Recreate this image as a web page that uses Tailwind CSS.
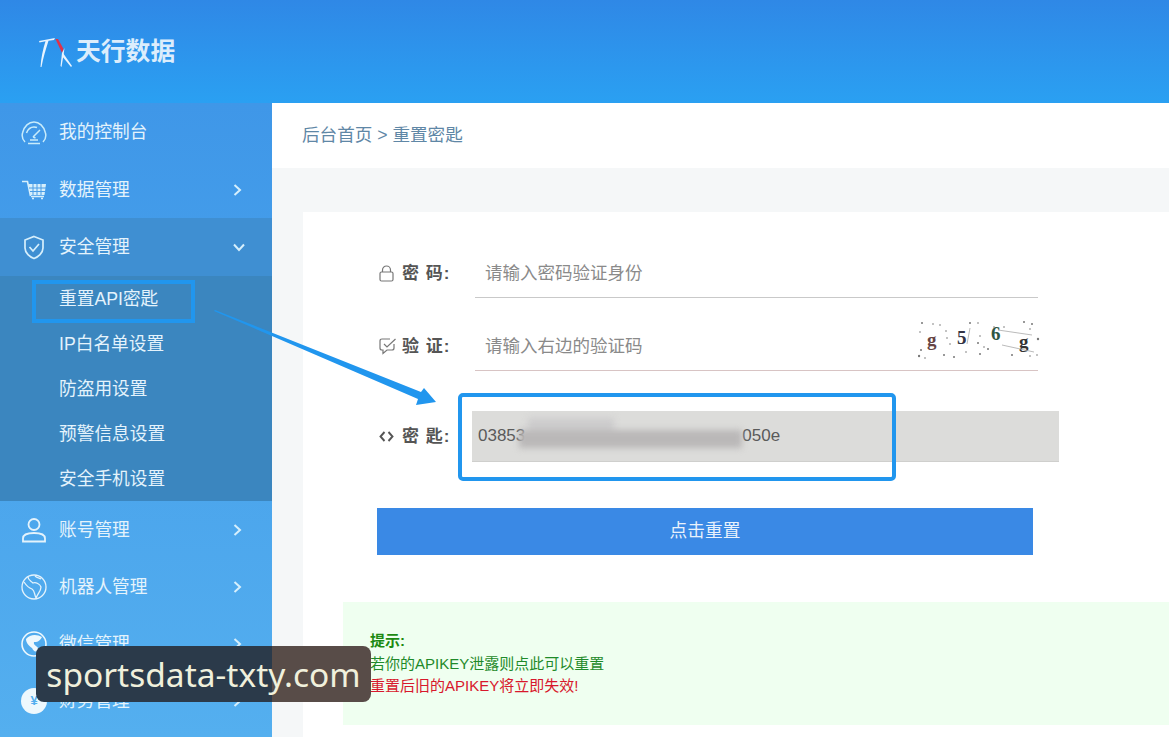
<!DOCTYPE html>
<html lang="zh-CN">
<head>
<meta charset="UTF-8">
<title>天行数据 - 重置密匙</title>
<script src="https://cdn.jsdelivr.net/npm/@tailwindcss/browser@4"></script>
</head>
<body class="font-['Liberation_Sans','Noto_Sans_CJK_SC',sans-serif] bg-white">
<div class="relative w-[1169px] h-[737px] overflow-hidden">

  <!-- header -->
  <header class="h-[103px] bg-linear-to-b from-[#2f88e6] to-[#2aa0f2] flex items-center pl-[38px] pt-[2px]">
    <svg class="w-[36px] h-[30px] shrink-0" viewBox="0 0 36 30">
      <path d="M1 3 L17 0 L16 2 L10.5 2.8 C8 11 5 20 3.5 29 L2.5 29 C3 20 5 11 7.5 3.2 L1.5 4.5 Z" fill="#e8f4ff"/>
      <path d="M17.5 1 L20 1 L25.5 11 L24 15 Z" fill="#e0304a"/>
      <path d="M26.5 10 L25.5 17 L23.5 29 L22.5 28 L24 15 Z" fill="#e8f4ff"/>
      <path d="M25 15 L34 28 L33 29 L24 18 Z" fill="#e8f4ff"/>
    </svg>
    <span class="ml-[2px] text-[24.8px] font-bold text-[#dcedfc] leading-none">天行数据</span>
  </header>

  <div class="flex h-[634px]">
    <!-- sidebar -->
    <aside class="w-[272px] shrink-0 bg-linear-to-b from-[#3f97e8] to-[#54afef] text-[17.7px] text-[#e4f3fc]">
      <a class="h-[57px] pt-[2px] flex items-center">
        <svg class="ml-[21px] w-[26px] h-[26px]" viewBox="0 0 26 26" fill="none" stroke="#c8ecfb" stroke-width="1.5"><path d="M4 22 C1 19 1 15 1.5 13 C3 6 8 2 13 2 C18 2 23 6 24.5 13 C25 15 25 19 22 22"/><path d="M5.5 13 C7 9 10 7 13 7 C14 7 15 7 16 7.5"/><path d="M7 23.5 H19"/><path d="M9 20 H17"/><path d="M12 17 L19 10 M12 17 L14.5 18"/></svg>
        <span class="ml-[12px]">我的控制台</span>
      </a>
      <a class="h-[57px] pt-[3px] flex items-center">
        <svg class="ml-[21px] w-[26px] h-[20px]" viewBox="0 0 26 20">
          <path d="M1 1.5 H6.5 L9.5 16" fill="none" stroke="#d6effc" stroke-width="1.6"/>
          <path d="M7.5 4 H25 L23.5 15 H9.5 Z" fill="#d6effc"/>
          <path d="M12 4 V15 M16 4 V15 M20 4 V15 M8 8 H25 M9 11.5 H24" stroke="#4a9de6" stroke-width="1"/>
          <path d="M10 16.5 H23 M11 18.5 H13 M20 18.5 H22" stroke="#d6effc" stroke-width="1.4"/>
        </svg>
        <span class="ml-[12px]">数据管理</span>
        <svg class="ml-auto mr-[30px] w-[9px] h-[14px]" viewBox="0 0 9 14" fill="none" stroke="#d6effc" stroke-width="2"><path d="M1.5 2 L7 7 L1.5 12"/></svg>
      </a>
      <a class="mt-[1px] h-[58px] pt-[1px] flex items-center bg-[#3f8fd2]">
        <svg class="ml-[23px] w-[22px] h-[25px]" viewBox="0 0 22 25" fill="none" stroke="#d6effc" stroke-width="1.7"><path d="M11 1.5 L20 5 V13 C20 18 15 22 11 23.5 C7 22 2 18 2 13 V5 Z"/><path d="M6.5 12 L10 16 L16 9"/></svg>
        <span class="ml-[14px]">安全管理</span>
        <svg class="ml-auto mr-[26px] w-[14px] h-[9px]" viewBox="0 0 14 9" fill="none" stroke="#d6effc" stroke-width="2"><path d="M2 1.5 L7 7 L12 1.5"/></svg>
      </a>
      <ul class="h-[225px] bg-[#3b86bf] pl-[59px]">
        <li class="h-[45px] pt-[1px] flex items-center">重置API密匙</li>
        <li class="h-[45px] pt-[1px] flex items-center">IP白名单设置</li>
        <li class="h-[45px] pt-[1px] flex items-center">防盗用设置</li>
        <li class="h-[45px] pt-[1px] flex items-center">预警信息设置</li>
        <li class="h-[45px] pt-[1px] flex items-center">安全手机设置</li>
      </ul>
      <a class="h-[57px] pt-[1px] flex items-center">
        <svg class="ml-[21px] w-[26px] h-[26px]" viewBox="0 0 26 26" fill="none" stroke="#e4f3fc" stroke-width="1.8"><circle cx="13" cy="7.5" r="5.5"/><path d="M2 24.5 V21.5 C2 18 6 16 13 16 C20 16 24 18 24 21.5 V24.5 Z"/></svg>
        <span class="ml-[12px]">账号管理</span>
        <svg class="ml-auto mr-[30px] w-[9px] h-[14px]" viewBox="0 0 9 14" fill="none" stroke="#d6effc" stroke-width="2"><path d="M1.5 2 L7 7 L1.5 12"/></svg>
      </a>
      <a class="h-[57px] pt-[1px] flex items-center">
        <svg class="ml-[21px] w-[26px] h-[26px]" viewBox="0 0 26 26" fill="none" stroke="#e4f3fc" stroke-width="1.3"><circle cx="13" cy="13" r="12"/><path d="M7 3 C7 6 10 7 12 9 C15 8 19 10 20 13 C20 17 17 19 15 24 C13 20 14 17 11 15 C8 14 5 11 3 8"/><path d="M14 2 C16 4 18 4 20 5"/></svg>
        <span class="ml-[12px]">机器人管理</span>
        <svg class="ml-auto mr-[30px] w-[9px] h-[14px]" viewBox="0 0 9 14" fill="none" stroke="#d6effc" stroke-width="2"><path d="M1.5 2 L7 7 L1.5 12"/></svg>
      </a>
      <a class="h-[57px] pt-[1px] flex items-center">
        <svg class="ml-[21px] w-[26px] h-[26px]" viewBox="0 0 26 26" fill="none"><circle cx="13" cy="13" r="12" stroke="#eef8fd" stroke-width="1.6"/><path d="M5 8 C9 3 16 3 21 6 C18 11 16 11 13 11 C12 14 16 15 18 18 C15 22 13 21 11 17 C8 15 5 12 5 8 Z" fill="#eef8fd"/></svg>
        <span class="ml-[12px]">微信管理</span>
        <svg class="ml-auto mr-[30px] w-[9px] h-[14px]" viewBox="0 0 9 14" fill="none" stroke="#d6effc" stroke-width="2"><path d="M1.5 2 L7 7 L1.5 12"/></svg>
      </a>
      <a class="h-[57px] pt-[1px] flex items-center">
        <span class="ml-[21px] w-[26px] h-[26px] rounded-full bg-[#eef8fd] text-[#54afef] text-[13px] font-bold flex items-center justify-center">¥</span>
        <span class="ml-[12px]">财务管理</span>
        <svg class="ml-auto mr-[30px] w-[9px] h-[14px]" viewBox="0 0 9 14" fill="none" stroke="#d6effc" stroke-width="2"><path d="M1.5 2 L7 7 L1.5 12"/></svg>
      </a>
    </aside>

    <!-- main -->
    <main class="flex-1 flex flex-col min-w-0">
      <div class="h-[65px] shrink-0 flex items-center pl-[30px] text-[17.6px] text-[#5f87a6]">后台首页 &gt; 重置密匙</div>
      <div class="flex-1 bg-[#f5f7f8] pt-[44px] pl-[31px]">
        <div class="h-full bg-white pt-[36px]">
          <div class="ml-[76px] h-[50px] flex items-center">
            <svg class="w-[15px] h-[17px] mr-[8px]" viewBox="0 0 15 17" fill="none" stroke="#777" stroke-width="1.2"><rect x="1" y="7" width="13" height="9" rx="1.5"/><path d="M3.5 7 V5 A4 4 0 0 1 11.5 5 V7"/></svg>
            <label class="w-[73px] pt-[1px] text-[17px] font-bold text-[#555] tracking-[1px]">密 码:</label>
            <div class="w-[563px] h-full flex items-center pl-[10px] pt-[2px] border-b border-[#c9c9c9] text-[17.5px] text-[#8a8a8a]">请输入密码验证身份</div>
          </div>
          <div class="ml-[76px] mt-[23px] h-[50px] flex items-center">
            <svg class="w-[18px] h-[18px] mr-[5px]" viewBox="0 0 18 18" fill="none" stroke="#777" stroke-width="1.2"><path d="M11 2 H3 Q1 2 1 4 V11 Q1 13 3 13 H4 V16.5 L8 13 H13 Q15 13 15 11 V7"/><path d="M5 7 L8 10 L16.5 2"/></svg>
            <label class="w-[73px] pt-[1px] text-[17px] font-bold text-[#555] tracking-[1px]">验 证:</label>
            <div class="relative w-[563px] h-full flex items-center pl-[10px] pt-[2px] border-b border-[#d8c4c4] text-[17.5px] text-[#8a8a8a]">请输入右边的验证码
              <svg class="absolute left-[443px] top-[-1px] w-[124px] h-[42px]" viewBox="0 0 124 42">
                <g font-family="'Liberation Serif',serif" font-weight="bold" font-size="19">
                  <text x="9" y="26" fill="#664444">g</text>
                  <text x="39" y="24" fill="#333344">5</text>
                  <text x="73" y="20" fill="#2f5544">6</text>
                  <text x="101" y="28" fill="#333333">g</text>
                </g>
                <g stroke="#aaa" stroke-width=".8" fill="none"><path d="M52 8 L49 24"/><path d="M80 10 L114 15"/><path d="M84 25 L116 32"/></g>
                <g fill="#777">
                  <circle cx="4" cy="3" r="1"/><circle cx="15" cy="4" r=".8"/><circle cx="22" cy="5" r=".8"/><circle cx="2" cy="12" r=".8"/><circle cx="3" cy="30" r="1"/><circle cx="1" cy="36" r="1.2"/><circle cx="7" cy="38" r=".8"/><circle cx="26" cy="35" r="1"/><circle cx="36" cy="37" r="1"/>
                  <circle cx="29" cy="18" r=".8"/><circle cx="32" cy="24" r=".8"/><circle cx="28" cy="11" r=".8"/><circle cx="52" cy="3" r="1"/><circle cx="60" cy="3" r=".8"/><circle cx="62" cy="16" r=".8"/><circle cx="60" cy="23" r="1"/><circle cx="66" cy="27" r=".8"/><circle cx="70" cy="29" r="1"/><circle cx="62" cy="34" r="1"/>
                  <circle cx="76" cy="7" r=".8"/><circle cx="86" cy="7" r=".8"/><circle cx="106" cy="2" r="1"/><circle cx="114" cy="4" r="1"/><circle cx="120" cy="19" r="1.2"/><circle cx="112" cy="9" r=".8"/><circle cx="94" cy="35" r="1"/><circle cx="112" cy="36" r=".8"/><circle cx="119" cy="35" r=".8"/><circle cx="48" cy="32" r=".8"/>
                </g>
              </svg>
            </div>
          </div>
          <div class="ml-[76px] mt-[40px] h-[51px] flex items-center">
            <svg class="w-[15px] h-[11px] mr-[8px]" viewBox="0 0 15 11" fill="none" stroke="#555" stroke-width="1.9"><path d="M5.5 1 L1.5 5.5 L5.5 10"/><path d="M9.5 1 L13.5 5.5 L9.5 10"/></svg>
            <label class="w-[70px] pt-[1px] text-[17px] font-bold text-[#555] tracking-[1px]">密 匙:</label>
            <div class="relative w-[587px] h-full flex items-center pl-[6px] bg-[#dcdcda] border-b border-[#cfcfcd] text-[17px] text-[#5a5a5a]">
              <span>03853</span><span class="ml-[217px]">050e</span>
              <div class="absolute left-[56px] top-[7px] w-[86px] h-[18px] bg-[#cdcccd] blur-[3px]"></div>
              <div class="absolute left-[47px] top-[19px] w-[223px] h-[18px] bg-[#bab8b8] blur-[3px]"></div>
            </div>
          </div>
          <button class="ml-[74px] mt-[46px] w-[656px] h-[47px] flex items-center justify-center bg-[#3a89e5] text-[17.7px] text-[#e8f2fc]">点击重置</button>
          <div class="ml-[40px] mt-[47px] h-[123px] bg-[#effff0] pl-[27px] pt-[28px] text-[15px] leading-[22.5px]">
            <p class="font-bold text-[#1d8a12]">提示:</p>
            <p class="text-[#1f8a2a]">若你的APIKEY泄露则点此可以重置</p>
            <p class="text-[#d8182c]">重置后旧的APIKEY将立即失效!</p>
          </div>
        </div>
      </div>
    </main>
  </div>

  <!-- annotation marks -->
  <div class="absolute left-[32px] top-[280px] w-[163px] h-[43px] border-[4px] border-[#2196ee]"></div>
  <div class="absolute left-[458px] top-[393px] w-[438px] h-[88px] border-[4px] border-[#2196ee] rounded-[5px]"></div>
  <svg class="absolute left-[210px] top-[305px] w-[232px] h-[105px]" viewBox="0 0 232 105">
    <path d="M5 5 L211 87 L214 83 L226 97 L206 100 L208 94 L4 6 Z" fill="#2196ee"/>
  </svg>

  <!-- watermark -->
  <div class="absolute left-[36px] top-[646px] w-[335px] h-[56px] rounded-[8px] bg-[linear-gradient(90deg,#2b3a4a_236px,#584c48_236px)] flex items-center justify-center font-['Noto_Sans',sans-serif] text-[33.5px] text-[#f0f0dc] whitespace-nowrap">sportsdata-txty.com</div>
</div>
</body>
</html>
